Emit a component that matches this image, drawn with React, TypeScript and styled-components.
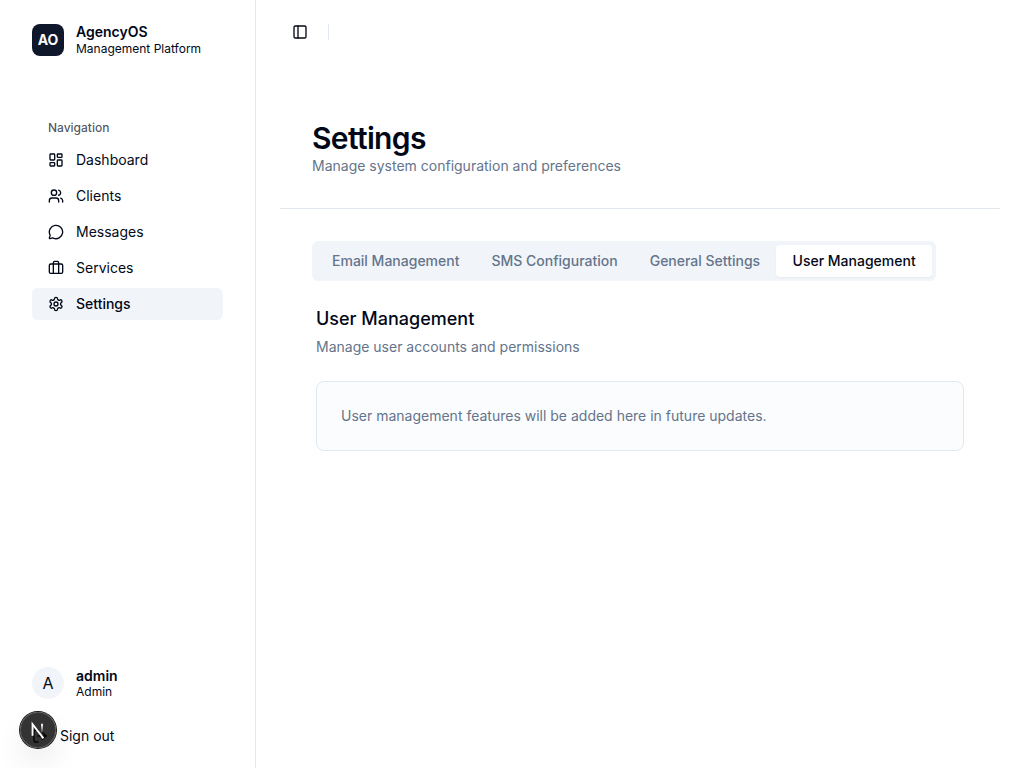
import React from "react";
import styled, { createGlobalStyle } from "styled-components";
import {
  LayoutDashboard,
  Users,
  MessageCircle,
  LogOut,
  PanelLeft,
} from "lucide-react";

const GlobalStyle = createGlobalStyle`
  *, *::before, *::after { box-sizing: border-box; }
  body {
    margin: 0;
    background: #ffffff;
    color: #020817;
    font-family: Inter, "Liberation Sans", sans-serif;
    font-size: 14px;
    line-height: 20px;
  }
  h1, h2, p { margin: 0; }
  button { font: inherit; color: inherit; border: 0; background: none; padding: 0; }
`;

const Shell = styled.div`
  display: flex;
  height: 100vh;
  overflow: hidden;
`;

const Sidebar = styled.aside`
  display: flex;
  flex-direction: column;
  width: 256px;
  flex-shrink: 0;
  padding: 24px 32px 16px;
  border-right: 1px solid #e2e8f0;
`;

const Identity = styled.div`
  display: flex;
  align-items: center;
  gap: 12px;
  height: 32px;
`;

const LogoMark = styled.div`
  display: flex;
  align-items: center;
  justify-content: center;
  width: 32px;
  height: 32px;
  border-radius: 8px;
  background: #0f172a;
  color: #f8fafc;
  font-weight: 700;
`;

const Avatar = styled.div`
  display: flex;
  align-items: center;
  justify-content: center;
  width: 32px;
  height: 32px;
  border-radius: 50%;
  background: #f1f5f9;
  font-size: 16px;
`;

const IdentityText = styled.div<{ $lowered?: boolean }>`
  display: flex;
  flex-direction: column;
  padding-top: ${(p) => (p.$lowered ? 1 : 0)}px;
`;

const IdentityName = styled.span`
  font-weight: 600;
  line-height: 17.5px;
`;

const IdentityDetail = styled.span`
  font-size: 12px;
  line-height: 16px;
`;

const NavLabel = styled.div`
  display: flex;
  align-items: center;
  height: 32px;
  margin-top: 56px;
  padding: 0 16px;
  font-size: 12px;
  font-weight: 500;
  color: rgba(2, 8, 23, 0.7);
`;

const Nav = styled.nav`
  display: flex;
  flex-direction: column;
  gap: 4px;
  flex: 1;
`;

const NavItem = styled.a<{ $active?: boolean }>`
  display: flex;
  align-items: center;
  gap: 12px;
  height: 32px;
  padding: 0 16px;
  border-radius: 6px;
  background: ${(p) => (p.$active ? "#f1f5f9" : "transparent")};
  font-weight: ${(p) => (p.$active ? 500 : 400)};
`;

const SignOut = styled.button`
  display: flex;
  align-items: center;
  gap: 12px;
  height: 32px;
  margin-top: 21px;
`;

const Main = styled.main`
  flex: 1;
  min-width: 0;
`;

const TopBar = styled.header`
  display: flex;
  align-items: center;
  gap: 20px;
  height: 64px;
  padding: 0 36px;
`;

const Separator = styled.div`
  width: 1px;
  height: 16px;
  background: #e2e8f0;
`;

const Page = styled.div`
  padding: 24px;
`;

const PageHeader = styled.div`
  padding: 32px;
  border-bottom: 1px solid #e2e8f0;
`;

const PageTitle = styled.h1`
  font-size: 30px;
  line-height: 36px;
  font-weight: 600;
  letter-spacing: -0.65px;
`;

const Muted = styled.p`
  color: #64748b;
`;

const PageBody = styled.div`
  padding: 32px;
`;

const Tabs = styled.div`
  display: inline-flex;
  align-items: center;
  height: 40px;
  padding: 4px;
  border-radius: 6px;
  background: #f1f5f9;
`;

const Tab = styled.button<{ $active?: boolean }>`
  height: 32px;
  padding: 0 ${(p) => (p.$active ? 16.4 : 16)}px;
  border-radius: 4px;
  font-weight: 500;
  white-space: nowrap;
  color: ${(p) => (p.$active ? "#020817" : "#64748b")};
  background: ${(p) => (p.$active ? "#ffffff" : "transparent")};
  box-shadow: ${(p) => (p.$active ? "0 1px 2px rgba(0, 0, 0, 0.05)" : "none")};
`;

const Panel = styled.section`
  padding: 24px 4px 0;
`;

const PanelTitle = styled.h2`
  margin-bottom: 4px;
  font-size: 18px;
  line-height: 28px;
  font-weight: 500;
`;

const Notice = styled.div`
  margin-top: 24px;
  padding: 24px;
  border: 1px solid #e2e8f0;
  border-radius: 8px;
  background: #fbfcfe;
`;

const DevBadge = styled.div`
  position: fixed;
  left: 20px;
  bottom: 20px;
  width: 36px;
  height: 36px;
  border-radius: 50%;
  background: rgba(0, 0, 0, 0.8);
  box-shadow: 0 0 0 1px #171717, inset 0 0 0 1px rgba(255, 255, 255, 0.14),
    0 16px 32px -8px rgba(0, 0, 0, 0.24);
`;

const navItems = [
  { label: "Dashboard", icon: LayoutDashboard },
  { label: "Clients", icon: Users },
  { label: "Messages", icon: MessageCircle },
  { label: "Services", icon: BriefcaseIcon },
  { label: "Settings", icon: SettingsIcon, active: true },
];

const tabs = ["Email Management", "SMS Configuration", "General Settings", "User Management"];

function BriefcaseIcon({ size = 16 }: { size?: number }) {
  return (
    <svg width={size} height={size} viewBox="0 0 24 24" fill="none" stroke="currentColor" strokeWidth="2" strokeLinecap="round" strokeLinejoin="round">
      <path d="M16 20V4a2 2 0 0 0-2-2h-4a2 2 0 0 0-2 2v16" />
      <rect width="20" height="14" x="2" y="6" rx="2" />
    </svg>
  );
}

function SettingsIcon({ size = 16 }: { size?: number }) {
  return (
    <svg width={size} height={size} viewBox="0 0 24 24" fill="none" stroke="currentColor" strokeWidth="2" strokeLinecap="round" strokeLinejoin="round">
      <path d="M12.22 2h-.44a2 2 0 0 0-2 2v.18a2 2 0 0 1-1 1.73l-.43.25a2 2 0 0 1-2 0l-.15-.08a2 2 0 0 0-2.73.73l-.22.38a2 2 0 0 0 .73 2.73l.15.1a2 2 0 0 1 1 1.72v.51a2 2 0 0 1-1 1.74l-.15.09a2 2 0 0 0-.73 2.73l.22.38a2 2 0 0 0 2.73.73l.15-.08a2 2 0 0 1 2 0l.43.25a2 2 0 0 1 1 1.73V20a2 2 0 0 0 2 2h.44a2 2 0 0 0 2-2v-.18a2 2 0 0 1 1-1.73l.43-.25a2 2 0 0 1 2 0l.15.08a2 2 0 0 0 2.73-.73l.22-.39a2 2 0 0 0-.73-2.73l-.15-.08a2 2 0 0 1-1-1.74v-.5a2 2 0 0 1 1-1.74l.15-.09a2 2 0 0 0 .73-2.73l-.22-.38a2 2 0 0 0-2.73-.73l-.15.08a2 2 0 0 1-2 0l-.43-.25a2 2 0 0 1-1-1.73V4a2 2 0 0 0-2-2z" />
      <circle cx="12" cy="12" r="3" />
    </svg>
  );
}

function FrameworkMark() {
  return (
    <svg width="36" height="36" viewBox="0 0 36 36" fill="none">
      <defs>
        <linearGradient id="diagonal" x1="9.95" y1="11.13" x2="15.25" y2="18.23" gradientUnits="userSpaceOnUse">
          <stop stopColor="#fff" />
          <stop offset="0.6" stopColor="#fff" />
          <stop offset="1" stopColor="#fff" stopOpacity="0" />
        </linearGradient>
        <linearGradient id="stem" x1="11.82" y1="1.5" x2="11.79" y2="9.63" gradientUnits="userSpaceOnUse">
          <stop stopColor="#fff" />
          <stop offset="1" stopColor="#fff" stopOpacity="0" />
        </linearGradient>
      </defs>
      <g transform="translate(10.2 11.2)" strokeWidth="1.86">
        <path d="M13.3 15.2 L2.34 1 V12.6" stroke="url(#diagonal)" />
        <path d="M11.825 0.6 V13.1" stroke="url(#stem)" />
      </g>
    </svg>
  );
}

export default function App() {
  return (
    <>
      <GlobalStyle />
      <Shell>
        <Sidebar>
          <Identity>
            <LogoMark>AO</LogoMark>
            <IdentityText>
              <IdentityName>AgencyOS</IdentityName>
              <IdentityDetail>Management Platform</IdentityDetail>
            </IdentityText>
          </Identity>
          <NavLabel>Navigation</NavLabel>
          <Nav>
            {navItems.map(({ label, icon: Icon, active }) => (
              <NavItem key={label} $active={active}>
                <Icon size={16} />
                {label}
              </NavItem>
            ))}
          </Nav>
          <Identity>
            <Avatar>A</Avatar>
            <IdentityText $lowered>
              <IdentityName>admin</IdentityName>
              <IdentityDetail>Admin</IdentityDetail>
            </IdentityText>
          </Identity>
          <SignOut>
            <LogOut size={16} />
            Sign out
          </SignOut>
        </Sidebar>
        <Main>
          <TopBar>
            <PanelLeft size={16} />
            <Separator />
          </TopBar>
          <Page>
            <PageHeader>
              <PageTitle>Settings</PageTitle>
              <Muted>Manage system configuration and preferences</Muted>
            </PageHeader>
            <PageBody>
              <Tabs>
                {tabs.map((name) => (
                  <Tab key={name} $active={name === "User Management"}>
                    {name}
                  </Tab>
                ))}
              </Tabs>
              <Panel>
                <PanelTitle>User Management</PanelTitle>
                <Muted>Manage user accounts and permissions</Muted>
                <Notice>
                  <Muted>User management features will be added here in future updates.</Muted>
                </Notice>
              </Panel>
            </PageBody>
          </Page>
        </Main>
      </Shell>
      <DevBadge>
        <FrameworkMark />
      </DevBadge>
    </>
  );
}
